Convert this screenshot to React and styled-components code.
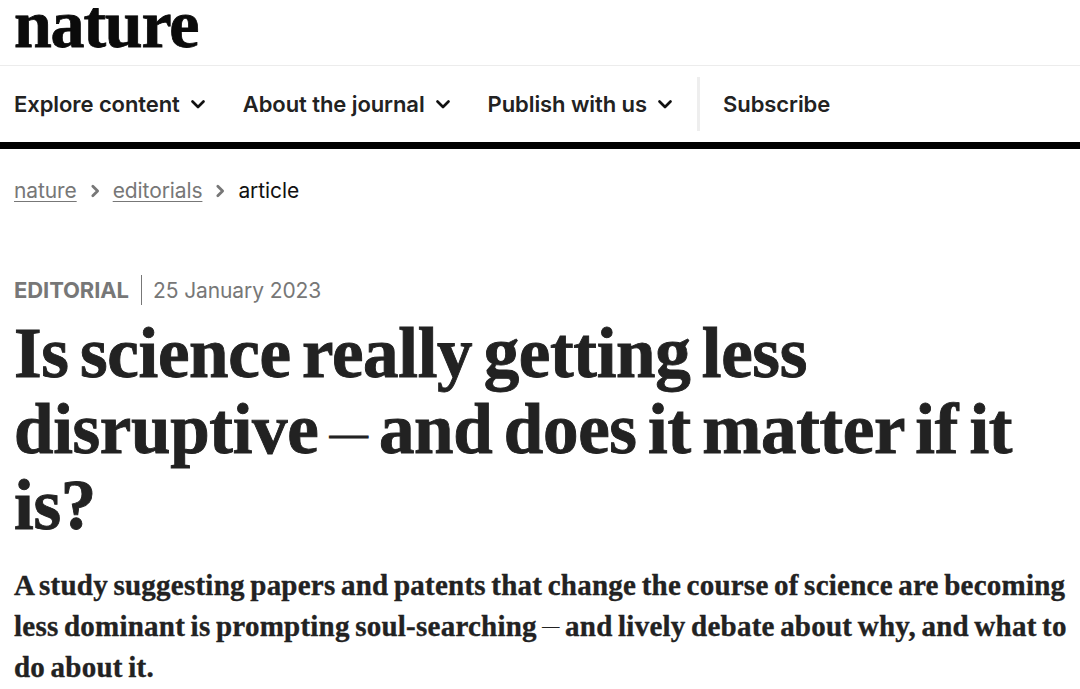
import React from 'react';
import styled, { createGlobalStyle } from 'styled-components';

const GlobalStyle = createGlobalStyle`
  html, body {
    margin: 0;
    padding: 0;
    background: #fff;
    overflow: hidden;
  }
  body {
    font-family: Inter, "Liberation Sans", sans-serif;
  }
`;

const Page = styled.div`
  width: 1080px;
  height: 689px;
  overflow: hidden;
`;

const Masthead = styled.header`
  height: 65px;
  padding-left: 14px;
  border-bottom: 1px solid #ececec;
`;

const Logo = styled.div`
  font-family: "Liberation Serif", serif;
  font-weight: 700;
  font-size: 68px;
  line-height: 48px;
  letter-spacing: -1.2px;
  color: #0b0b0b;
  -webkit-text-stroke: 0.8px #0b0b0b;
`;

const NavBar = styled.nav`
  height: 76px;
  border-bottom: 7px solid #000;
  display: flex;
  align-items: center;
  padding-left: 14px;
`;

const NavItem = styled.a`
  display: flex;
  align-items: center;
  gap: 10px;
  margin-right: 37px;
  font-size: 22px;
  font-weight: 600;
  letter-spacing: -0.08px;
  color: #222;
`;

const NavDivider = styled.span`
  width: 3px;
  height: 54px;
  background: #eeeeee;
  margin: 0 23px 0 -13px;
`;

const Chevron = ({ size = 16, dir = 'down', color = '#111', weight = 2.7 }) => (
  <svg width={size} height={size} viewBox="0 0 16 16" fill="none" stroke={color} strokeWidth={weight} strokeLinecap="round" strokeLinejoin="round">
    <path d={dir === 'down' ? 'M2.5 5.5 8 11l5.5-5.5' : 'M5.5 2.5 11 8l-5.5 5.5'} />
  </svg>
);

const Crumbs = styled.ol`
  list-style: none;
  margin: 0;
  padding: 28px 0 0 14px;
  display: flex;
  align-items: center;
  gap: 11px;
  font-size: 21px;
  line-height: 28px;
  letter-spacing: -0.1px;
`;

const CrumbLink = styled.a`
  color: #777;
  text-decoration: underline;
  text-underline-offset: 3px;
  text-decoration-thickness: 1px;
`;

const CrumbCurrent = styled.span`
  color: #111;
`;

const Meta = styled.div`
  margin: 70px 0 0 14px;
  display: flex;
  align-items: center;
  height: 30px;
  color: #777;
`;

const Kind = styled.span`
  font-size: 22px;
  font-weight: 700;
  letter-spacing: -0.1px;
  padding-right: 12px;
  border-right: 1px solid #777;
  line-height: 30px;
`;

const DateText = styled.span`
  font-size: 21px;
  letter-spacing: -0.1px;
  padding-left: 11px;
`;

const Title = styled.h1`
  margin: 10px 0 0 14px;
  font-family: "Liberation Serif", serif;
  font-weight: 700;
  font-size: 71px;
  line-height: 76px;
  letter-spacing: -0.33px;
  word-spacing: -6px;
  color: #222;
  -webkit-text-stroke: 0.9px #222;
`;

const Dash = styled.span`
  font-size: ${props => props.$size}px;
  font-weight: 400;
  line-height: 0;
  vertical-align: ${props => props.$lift}px;
  -webkit-text-stroke: ${props => props.$stroke}px #222;
`;

const Dek = styled.p`
  margin: 22px 0 0 14px;
  font-family: "Liberation Serif", serif;
  font-weight: 700;
  font-size: 29px;
  line-height: 41px;
  letter-spacing: 0.24px;
  word-spacing: -2px;
  color: #222;
  -webkit-text-stroke: 0.35px #222;
`;

const navItems = ['Explore content', 'About the journal', 'Publish with us'];

export default function App() {
  return (
    <Page>
      <GlobalStyle />
      <Masthead>
        <Logo>nature</Logo>
      </Masthead>
      <NavBar>
        {navItems.map(label => (
          <NavItem key={label}>
            {label}
            <Chevron />
          </NavItem>
        ))}
        <NavDivider />
        <NavItem>Subscribe</NavItem>
      </NavBar>
      <Crumbs>
        <li><CrumbLink>nature</CrumbLink></li>
        <li><Chevron size={14} dir="right" color="#777" weight={3.2} /></li>
        <li><CrumbLink>editorials</CrumbLink></li>
        <li><Chevron size={14} dir="right" color="#777" weight={3.2} /></li>
        <li><CrumbCurrent>article</CrumbCurrent></li>
      </Crumbs>
      <Meta>
        <Kind>EDITORIAL</Kind>
        <DateText>25 January 2023</DateText>
      </Meta>
      <Title>
        Is science really getting less<br />
        disruptive <Dash $size={38} $lift={7} $stroke={1.2}>—</Dash> and does it matter if it<br />
        is?
      </Title>
      <Dek>
        A study suggesting papers and patents that change the course of science are becoming<br />
        less dominant is prompting soul-searching <Dash $size={17} $lift={5} $stroke={0.4}>—</Dash> and lively debate about why, and what to<br />
        do about it.
      </Dek>
    </Page>
  );
}
